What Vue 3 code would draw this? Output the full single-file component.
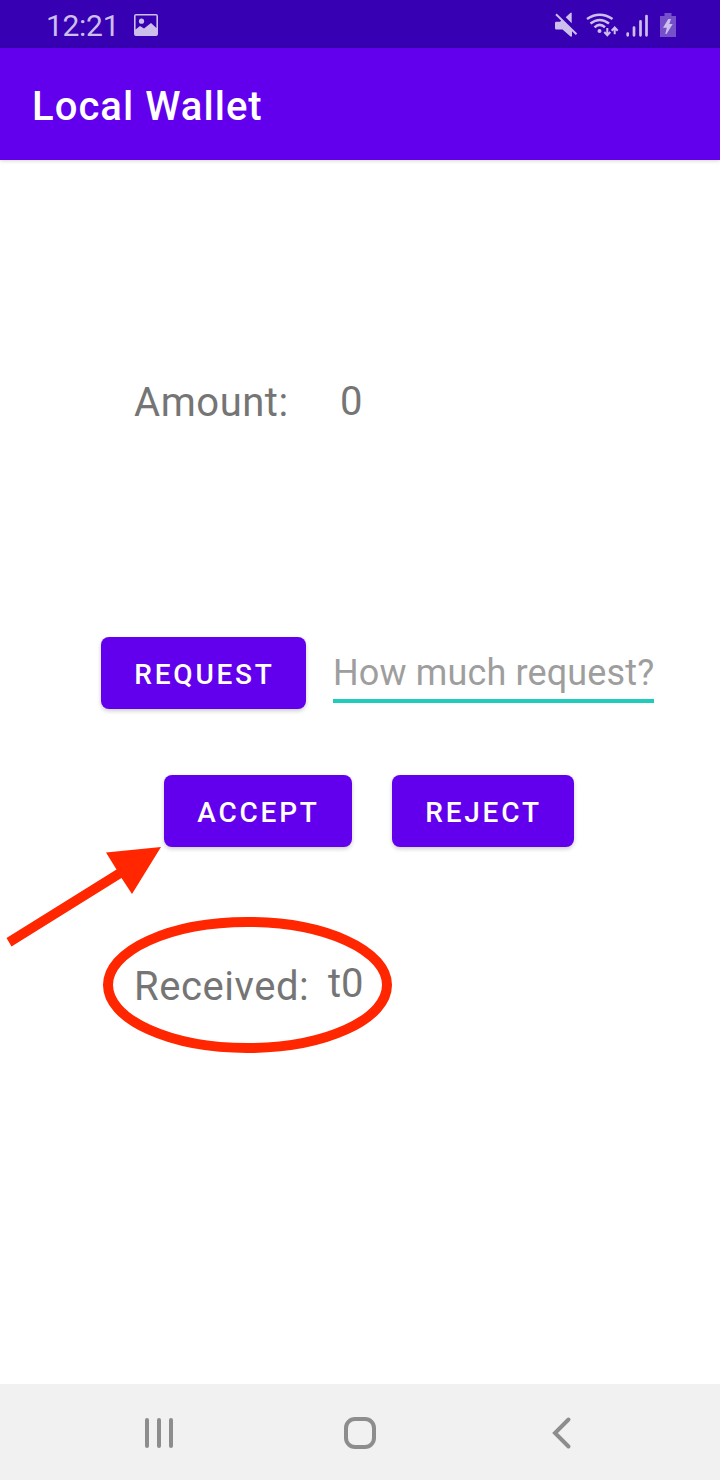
<script setup>
const title = 'Local Wallet'
const amount = '0'
const received = 't0'
</script>

<template>
  <div class="screen">
    <header class="status">
      <span class="clock">12:21</span>
      <svg class="photo" width="24" height="24" viewBox="0 0 24 24">
        <path fill-rule="evenodd" d="M2 0H22Q24 0 24 2V20Q24 22 22 22H2Q0 22 0 20V2Q0 0 2 0ZM1.600 1.600V15.500L6 12L10 14.500L17 9L22.400 14V1.600Z" />
        <circle cx="7.500" cy="7.200" r="2.600" />
      </svg>
      <svg class="signals" width="126" height="32" viewBox="0 0 126 32">
        <path d="M1 15Q1 13.700 2.300 13.700H6L8 12L18 22V28.500H16.500L8.500 21.500H2.300Q1 21.500 1 20.200ZM11.700 9.300L16.500 4.700H17.700V15.300Z" />
        <path class="line" d="M2 6.300L22.500 26.300" stroke-width="2" />
        <g class="line" stroke-width="2.500">
          <path d="M33 11Q45.700 2.500 58.500 11M36.500 15.500Q45.700 8.500 55 15.500M40.500 19.300Q45.700 14.500 51 19.300" />
        </g>
        <circle cx="45.500" cy="23" r="2" />
        <path class="line" d="M53.300 20V27M50.300 24L53.300 27.200L56.300 24M60.700 26.300V19M57.700 22.700L60.700 19.500L63.700 22.700" stroke-width="2" />
        <path class="line caps" d="M73.700 27.300V25.600M80 27.300V19.600M86.500 27.300V13.300M92.500 27.300V8" stroke-width="2.700" />
        <path class="cell" d="M110.500 5H117.500V8H122V29H106V8H110.500Z" />
        <path d="M114.300 11L109 19.800H112.800L111.300 26H112.500L118.700 16H115.300L117 11Z" />
      </svg>
    </header>

    <div class="toolbar"><h1>{{ title }}</h1></div>

    <main>
      <div class="row amount">
        <span class="label amount-label">Amount:</span>
        <span class="value">{{ amount }}</span>
      </div>
      <div class="row request">
        <button class="btn request-btn">REQUEST</button>
        <div class="field">How much request?</div>
      </div>
      <div class="row actions">
        <button class="btn accept-btn">ACCEPT</button>
        <button class="btn reject-btn">REJECT</button>
      </div>
      <div class="row received">
        <span class="label received-label">Received:</span>
        <span class="value raised">{{ received }}</span>
      </div>
    </main>

    <nav>
      <svg width="720" height="96" viewBox="0 0 720 96">
        <g class="nav-line" stroke-width="4">
          <path d="M147 36V62M159 36V62M171 36V62" />
          <rect x="346" y="35" width="28" height="28" rx="9" />
          <path d="M568.500 35.500L555 49L568.500 62.500" />
        </g>
      </svg>
    </nav>

    <svg class="annotation" width="720" height="1480" viewBox="0 0 720 1480">
      <path d="M161 847L132 894L121.500 878L11.500 946.500L6.500 938L116.500 869.500L106 852.500Z" />
      <ellipse cx="247.500" cy="985" rx="139.500" ry="63" />
    </svg>
  </div>
</template>

<style>
body {
  background: #fff;
}
</style>

<style scoped>
.screen {
  position: relative;
  display: flex;
  flex-direction: column;
  width: 720px;
  height: 1480px;
  overflow: hidden;
  background: #fff;
  font-family: Roboto, "Liberation Sans", sans-serif;
}
.status {
  display: flex;
  align-items: flex-start;
  height: 48px;
  padding-left: 46px;
  background: #3700b3;
  color: #cdbfec;
}
.clock {
  width: 88px;
  font-size: 30px;
  line-height: 52px;
  letter-spacing: -0.3px;
}
.status svg {
  fill: #cdbfec;
}
.photo {
  margin-top: 14px;
}
.signals {
  margin: 8px 0 0 396px;
}
.status .line {
  fill: none;
  stroke: #cdbfec;
}
.status .caps {
  stroke-linecap: round;
}
.status .cell {
  fill: #7650cb;
}
.toolbar {
  display: flex;
  align-items: center;
  height: 112px;
  padding: 6px 32px 0;
  box-sizing: border-box;
  background: #6200ee;
  box-shadow: 0 1px 4px rgba(0, 0, 0, 0.16);
}
h1 {
  margin: 0;
  color: #fff;
  font-size: 40px;
  font-weight: 500;
  line-height: 54px;
  letter-spacing: 1.05px;
  white-space: nowrap;
}
main {
  flex: 1;
  display: flex;
  flex-direction: column;
}
.row {
  display: flex;
  align-items: flex-start;
  white-space: nowrap;
}
.label,
.value {
  color: #757575;
  font-size: 40px;
  line-height: 54px;
}
.label {
  letter-spacing: 0.55px;
}
.amount {
  height: 54px;
  margin-top: 216px;
  padding-left: 134px;
}
.amount-label {
  width: 206px;
}
.amount .value {
  margin-top: -1px;
}
.request {
  height: 72px;
  margin-top: 207px;
  padding-left: 101px;
  gap: 27px;
}
.btn {
  height: 72px;
  padding: 2px 0 0 1px;
  border: 0;
  border-radius: 8px;
  background: #6200ee;
  box-shadow: 0 2px 4px rgba(0, 0, 0, 0.2);
  color: #fff;
  font-family: inherit;
  font-size: 28px;
  font-weight: 500;
  letter-spacing: 2.8px;
}
.request-btn {
  width: 205px;
  padding-left: 2px;
}
.accept-btn {
  width: 188px;
}
.reject-btn {
  width: 182px;
}
.field {
  width: 321px;
  height: 66px;
  box-sizing: border-box;
  border-bottom: 4px solid #21cbbb;
  color: #9e9e9e;
  font-size: 36px;
  line-height: 72px;
  letter-spacing: 0.14px;
}
.actions {
  margin-top: 66px;
  padding-left: 164px;
  gap: 40px;
}
.received {
  margin-top: 113px;
  padding-left: 134px;
}
.received-label {
  width: 194px;
}
.raised {
  margin-top: -3px;
}
nav {
  height: 96px;
  background: #f1f1f1;
}
nav svg {
  display: block;
}
.nav-line {
  fill: none;
  stroke: #8d8d8d;
  stroke-linecap: round;
}
.annotation {
  position: absolute;
  inset: 0;
  fill: #ff2600;
  pointer-events: none;
}
.annotation ellipse {
  fill: none;
  stroke: #ff2600;
  stroke-width: 10;
}
</style>
